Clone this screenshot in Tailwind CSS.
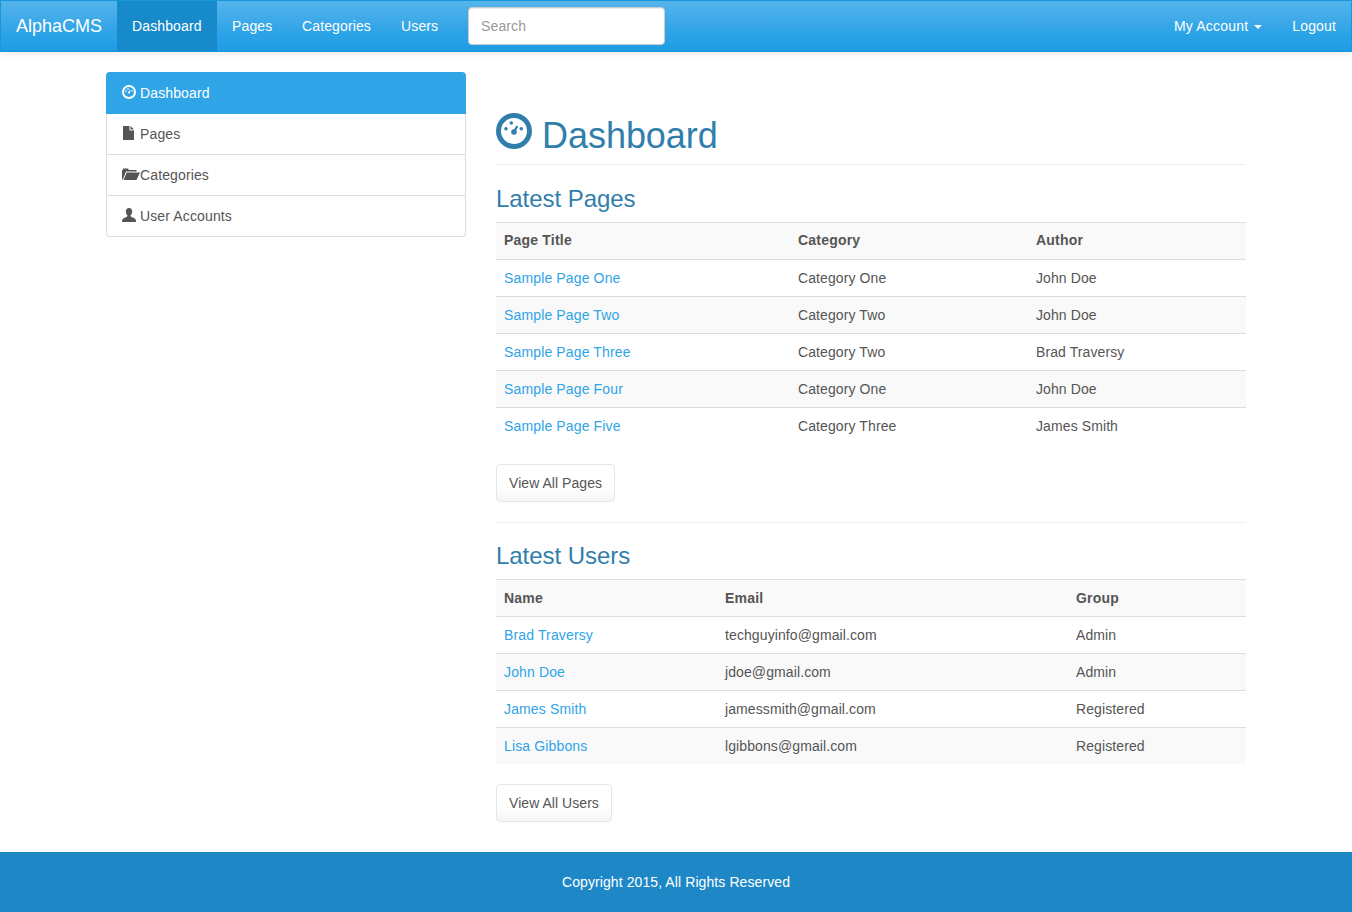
<!DOCTYPE html>
<html lang="en">
<head>
<meta charset="utf-8">
<title>AlphaCMS</title>
<script src="https://cdn.jsdelivr.net/npm/@tailwindcss/browser@4"></script>
</head>
<body class="bg-white text-[14px] leading-[20px] text-[#555555] font-['Liberation_Sans',Arial,sans-serif]">
<nav class="h-[52px] border border-[#1995dc] bg-gradient-to-b from-[#54b4eb] via-[#2fa4e7] via-60% to-[#1d9ce5] shadow-[0_1px_10px_rgba(0,0,0,0.1)] flex items-stretch text-white tracking-[0.12px]">
  <a class="block px-[15px] py-[15px] text-[18px] leading-[20px] tracking-normal">AlphaCMS</a>
  <ul class="flex">
    <li><a class="block w-[100px] h-[50px] px-[15px] py-[15px] bg-[#178acc]">Dashboard</a></li>
    <li><a class="block w-[70px] px-[15px] py-[15px]">Pages</a></li>
    <li><a class="block w-[99px] px-[15px] py-[15px]">Categories</a></li>
    <li><a class="block w-[67px] px-[15px] py-[15px]">Users</a></li>
  </ul>
  <div class="ml-[15px] pt-[6px]">
    <input placeholder="Search" class="w-[197px] h-[38px] px-[12px] bg-white border border-[#cccccc] rounded-[4px] text-[14px] text-[#555555] placeholder:text-[#999999] shadow-[inset_0_1px_1px_rgba(0,0,0,0.075)]">
  </div>
  <ul class="flex ml-auto">
    <li><a class="flex items-center h-[50px] px-[15px] tracking-[0.2px]">My Account<span class="ml-[6px] mt-[1px] w-0 h-0 border-x-[4px] border-x-transparent border-t-[4px] border-t-white"></span></a></li>
    <li><a class="block px-[15px] py-[15px] tracking-[0.15px]">Logout</a></li>
  </ul>
</nav>

<div class="w-[1170px] mx-auto mt-[20px] flex">
  <aside class="w-[390px] px-[15px]">
    <div class="flex flex-col tracking-[0.13px]">
      <a class="flex items-center h-[42px] px-[16px] bg-[#2fa4e7] rounded-t-[4px] text-white">
        <svg class="w-[14px] h-[14px] mr-[4px] shrink-0 -translate-y-px" viewBox="0 0 14 14"><path fill="#ffffff" fill-rule="evenodd" d="M7 0a7 7 0 1 1 0 14A7 7 0 0 1 7 0Zm0 2a5 5 0 1 0 0 10A5 5 0 0 0 7 2Z"/><circle cx="4" cy="6" r=".8" fill="#fff"/><circle cx="6" cy="3.900" r=".8" fill="#fff"/><circle cx="10" cy="6" r=".8" fill="#fff"/><circle cx="7" cy="7.500" r="1.100" fill="#fff"/><path d="M7 7.500 8.300 5" stroke="#fff" stroke-width="1"/></svg>
        Dashboard</a>
      <a class="flex items-center h-[41px] px-[15px] border-x border-b border-[#dddddd]">
        <svg class="w-[14px] h-[14px] mr-[4px] shrink-0 -translate-y-px" viewBox="0 0 14 14"><path fill="#555555" d="M1 0h6.500v4.500H12V14H1ZM8.500 0 12 3.500H8.500Z"/></svg>
        Pages</a>
      <a class="flex items-center h-[41px] px-[15px] border-x border-b border-[#dddddd]">
        <svg class="w-[18px] h-[14px] shrink-0 -translate-y-px" viewBox="0 0 18 14"><path fill="#555555" d="M0 3h1V1.500h5L7 3h7.500v1.500H4L1 12 0 12.800ZM4.700 5.500H18L14.500 13H1.500Z"/></svg>
        Categories</a>
      <a class="flex items-center h-[41px] px-[15px] border-x border-b border-[#dddddd] rounded-b-[4px]">
        <svg class="w-[14px] h-[14px] mr-[4px] shrink-0 -translate-y-px" viewBox="0 0 14 14"><path fill="#555555" d="M7 0c2 0 3.200 1.600 3.200 3.600 0 1.600-.8 3.200-1.700 4 .1.900.4 1.200 1.400 1.600C12 10 14 10.700 14 13v1H0v-1c0-2.300 2-3 4.100-3.800 1-.4 1.300-.7 1.400-1.600-.9-.8-1.700-2.400-1.700-4C3.800 1.600 5 0 7 0Z"/></svg>
        User Accounts</a>
    </div>
  </aside>

  <main class="w-[780px] px-[15px]">
    <div class="mt-[40px] mb-[21px] border-b border-[#eeeeee] h-[53px]">
      <h1 class="flex items-start text-[36px] leading-[40px] text-[#317eac] font-normal tracking-[-0.04px]">
        <svg class="w-[36px] h-[36px] mr-[10px] shrink-0 mt-px" viewBox="0 0 36 36"><path fill="#317eac" fill-rule="evenodd" d="M18 0a18 18 0 1 1 0 36A18 18 0 0 1 18 0Zm0 5a13 13 0 1 0 0 26 13 13 0 0 0 0-26Z"/><circle cx="10" cy="15.700" r="1.800" fill="#317eac"/><circle cx="15.300" cy="10" r="1.800" fill="#317eac"/><circle cx="25.300" cy="15.700" r="1.800" fill="#317eac"/><circle cx="18" cy="19" r="2.800" fill="#317eac"/><path d="M18 19 21.300 13" stroke="#317eac" stroke-width="2.200"/></svg>
        <span class="mt-[4px]">Dashboard</span></h1>
    </div>
    <h2 class="text-[24px] leading-[26px] text-[#317eac] font-normal mb-[10px] tracking-[-0.05px]">Latest Pages</h2>
    <table class="w-full table-fixed border-separate border-spacing-0 mb-[20px] tracking-[0.1px]">
      <colgroup><col class="w-[294px]"><col class="w-[238px]"><col></colgroup>
      <thead><tr class="bg-[#f9f9f9]">
        <th class="h-[37px] px-[8px] pb-[3px] text-left font-bold border-t border-[#dddddd] tracking-[0.2px]">Page Title</th><th class="px-[8px] pb-[3px] text-left font-bold border-t border-[#dddddd] tracking-[0.2px]">Category</th><th class="px-[8px] pb-[3px] text-left font-bold border-t border-[#dddddd] tracking-[0.2px]">Author</th>
      </tr></thead>
      <tbody>
        <tr><td class="h-[37px] px-[8px] border-t border-[#dddddd] text-[#2fa4e7] tracking-[0.14px]">Sample Page One</td><td class="px-[8px] border-t border-[#dddddd]">Category One</td><td class="px-[8px] border-t border-[#dddddd]">John Doe</td></tr>
        <tr class="bg-[#f9f9f9]"><td class="h-[37px] px-[8px] border-t border-[#dddddd] text-[#2fa4e7] tracking-[0.14px]">Sample Page Two</td><td class="px-[8px] border-t border-[#dddddd]">Category Two</td><td class="px-[8px] border-t border-[#dddddd]">John Doe</td></tr>
        <tr><td class="h-[37px] px-[8px] border-t border-[#dddddd] text-[#2fa4e7] tracking-[0.14px]">Sample Page Three</td><td class="px-[8px] border-t border-[#dddddd]">Category Two</td><td class="px-[8px] border-t border-[#dddddd]">Brad Traversy</td></tr>
        <tr class="bg-[#f9f9f9]"><td class="h-[37px] px-[8px] border-t border-[#dddddd] text-[#2fa4e7] tracking-[0.14px]">Sample Page Four</td><td class="px-[8px] border-t border-[#dddddd]">Category One</td><td class="px-[8px] border-t border-[#dddddd]">John Doe</td></tr>
        <tr><td class="h-[37px] px-[8px] border-t border-[#dddddd] text-[#2fa4e7] tracking-[0.14px]">Sample Page Five</td><td class="px-[8px] border-t border-[#dddddd]">Category Three</td><td class="px-[8px] border-t border-[#dddddd]">James Smith</td></tr>
      </tbody>
    </table>
    <a class="inline-block h-[38px] px-[12px] py-[8px] leading-[20px] border border-[#e6e6e6] rounded-[4px] bg-gradient-to-b from-white via-white via-60% to-[#f5f5f5] tracking-[0.05px]">View All Pages</a>
    <hr class="mt-[20px] mb-[20px] border-0 border-t border-[#eeeeee]">
    <h2 class="text-[24px] leading-[26px] text-[#317eac] font-normal mb-[10px] tracking-[-0.05px]">Latest Users</h2>
    <table class="w-full table-fixed border-separate border-spacing-0 mb-[20px] tracking-[0.1px]">
      <colgroup><col class="w-[221px]"><col class="w-[351px]"><col></colgroup>
      <thead><tr class="bg-[#f9f9f9]">
        <th class="h-[37px] px-[8px] text-left font-bold border-t border-[#dddddd] tracking-[0.2px]">Name</th><th class="px-[8px] text-left font-bold border-t border-[#dddddd] tracking-[0.2px]">Email</th><th class="px-[8px] text-left font-bold border-t border-[#dddddd] tracking-[0.2px]">Group</th>
      </tr></thead>
      <tbody>
        <tr><td class="h-[37px] px-[8px] border-t border-[#dddddd] text-[#2fa4e7] tracking-[0.14px]">Brad Traversy</td><td class="px-[8px] border-t border-[#dddddd]">techguyinfo@gmail.com</td><td class="px-[8px] border-t border-[#dddddd]">Admin</td></tr>
        <tr class="bg-[#f9f9f9]"><td class="h-[37px] px-[8px] border-t border-[#dddddd] text-[#2fa4e7] tracking-[0.14px]">John Doe</td><td class="px-[8px] border-t border-[#dddddd]">jdoe@gmail.com</td><td class="px-[8px] border-t border-[#dddddd]">Admin</td></tr>
        <tr><td class="h-[37px] px-[8px] border-t border-[#dddddd] text-[#2fa4e7] tracking-[0.14px]">James Smith</td><td class="px-[8px] border-t border-[#dddddd]">jamessmith@gmail.com</td><td class="px-[8px] border-t border-[#dddddd]">Registered</td></tr>
        <tr class="bg-[#f9f9f9]"><td class="h-[37px] px-[8px] border-t border-[#dddddd] text-[#2fa4e7] tracking-[0.14px]">Lisa Gibbons</td><td class="px-[8px] border-t border-[#dddddd]">lgibbons@gmail.com</td><td class="px-[8px] border-t border-[#dddddd]">Registered</td></tr>
      </tbody>
    </table>
    <a class="inline-block h-[38px] px-[12px] py-[8px] leading-[20px] border border-[#e6e6e6] rounded-[4px] bg-gradient-to-b from-white via-white via-60% to-[#f5f5f5] tracking-[0.05px]">View All Users</a>
  </main>
</div>

<footer class="mt-[30px] h-[60px] bg-[#1e88c7] text-white flex items-center justify-center tracking-[0.09px]">Copyright 2015, All Rights Reserved</footer>
</body>
</html>
